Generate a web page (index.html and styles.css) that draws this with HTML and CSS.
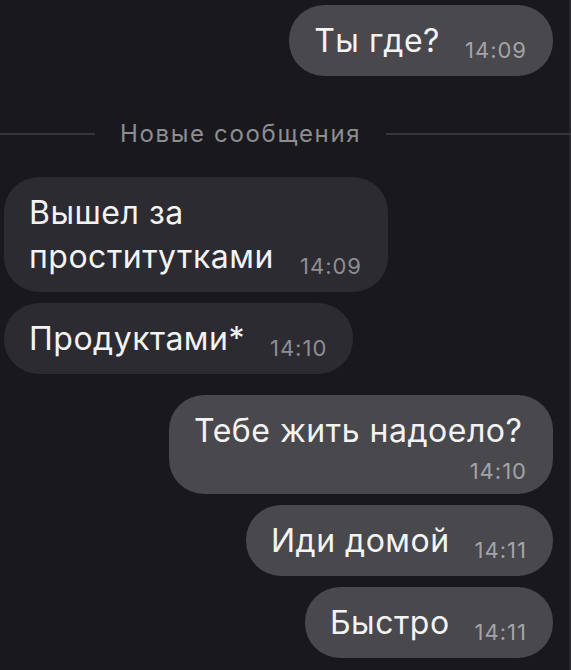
FILE: index.html
```html
<!DOCTYPE html>
<html lang="ru">
<head>
<meta charset="utf-8">
<title>Чат</title>
<link rel="stylesheet" href="styles.css">
</head>
<body>
<main class="chat">
  <div class="bubble bubble--out">Ты где?<span class="time">14:09</span></div>

  <div class="divider"><span class="divider__label">Новые сообщения</span></div>

  <div class="bubble bubble--in">Вышел за проститутками<span class="time">14:09</span></div>
  <div class="bubble bubble--in">Продуктами*<span class="time">14:10</span></div>

  <div class="bubble bubble--out bubble--group bubble--stacked">Тебе жить надоело?<span class="time">14:10</span></div>
  <div class="bubble bubble--out">Иди домой<span class="time">14:11</span></div>
  <div class="bubble bubble--out">Быстро<span class="time">14:11</span></div>
</main>
</body>
</html>
```

FILE: styles.css
```css
html, body {
  margin: 0;
  padding: 0;
  background: #19181d;
}

body {
  width: 571px;
  height: 670px;
  overflow: hidden;
  font-family: Inter, "Liberation Sans", Arial, sans-serif;
}

.chat {
  display: flex;
  flex-direction: column;
  gap: 11px;
  padding: 5px 18px 0 4px;
  height: 670px;
  box-sizing: border-box;
  box-shadow: inset -2px 0 #26262b;
}

.bubble {
  box-sizing: border-box;
  max-width: 384px;
  padding: 14px 26px 13px 25px;
  border-radius: 35px;
  font-size: 32px;
  line-height: 44px;
  letter-spacing: 0.5px;
  color: #f3f3f3;
}

.bubble--out {
  align-self: flex-end;
  background: #48484d;
}

.bubble--in {
  align-self: flex-start;
  background: #2c2b31;
}

.bubble--group {
  margin-top: 10px;
}

.time {
  float: right;
  margin: 21px 0 0 25px;
  font-size: 22px;
  line-height: 20px;
  letter-spacing: 1px;
}

.bubble--out .time {
  color: #a3a3a8;
}

.bubble--in .time {
  color: #8e8e93;
}

.bubble--stacked .time {
  margin-top: 8px;
}

.divider {
  display: flex;
  align-items: center;
  gap: 25px;
  margin: 32px -18px 17px -4px;
  height: 30px;
}

.divider::before {
  content: "";
  width: 95px;
  height: 2px;
  background: #37363c;
}

.divider::after {
  content: "";
  flex: 1;
  height: 2px;
  background: #37363c;
}

.divider__label {
  font-size: 24px;
  line-height: 30px;
  letter-spacing: 1.65px;
  color: #8d8d92;
}
```
